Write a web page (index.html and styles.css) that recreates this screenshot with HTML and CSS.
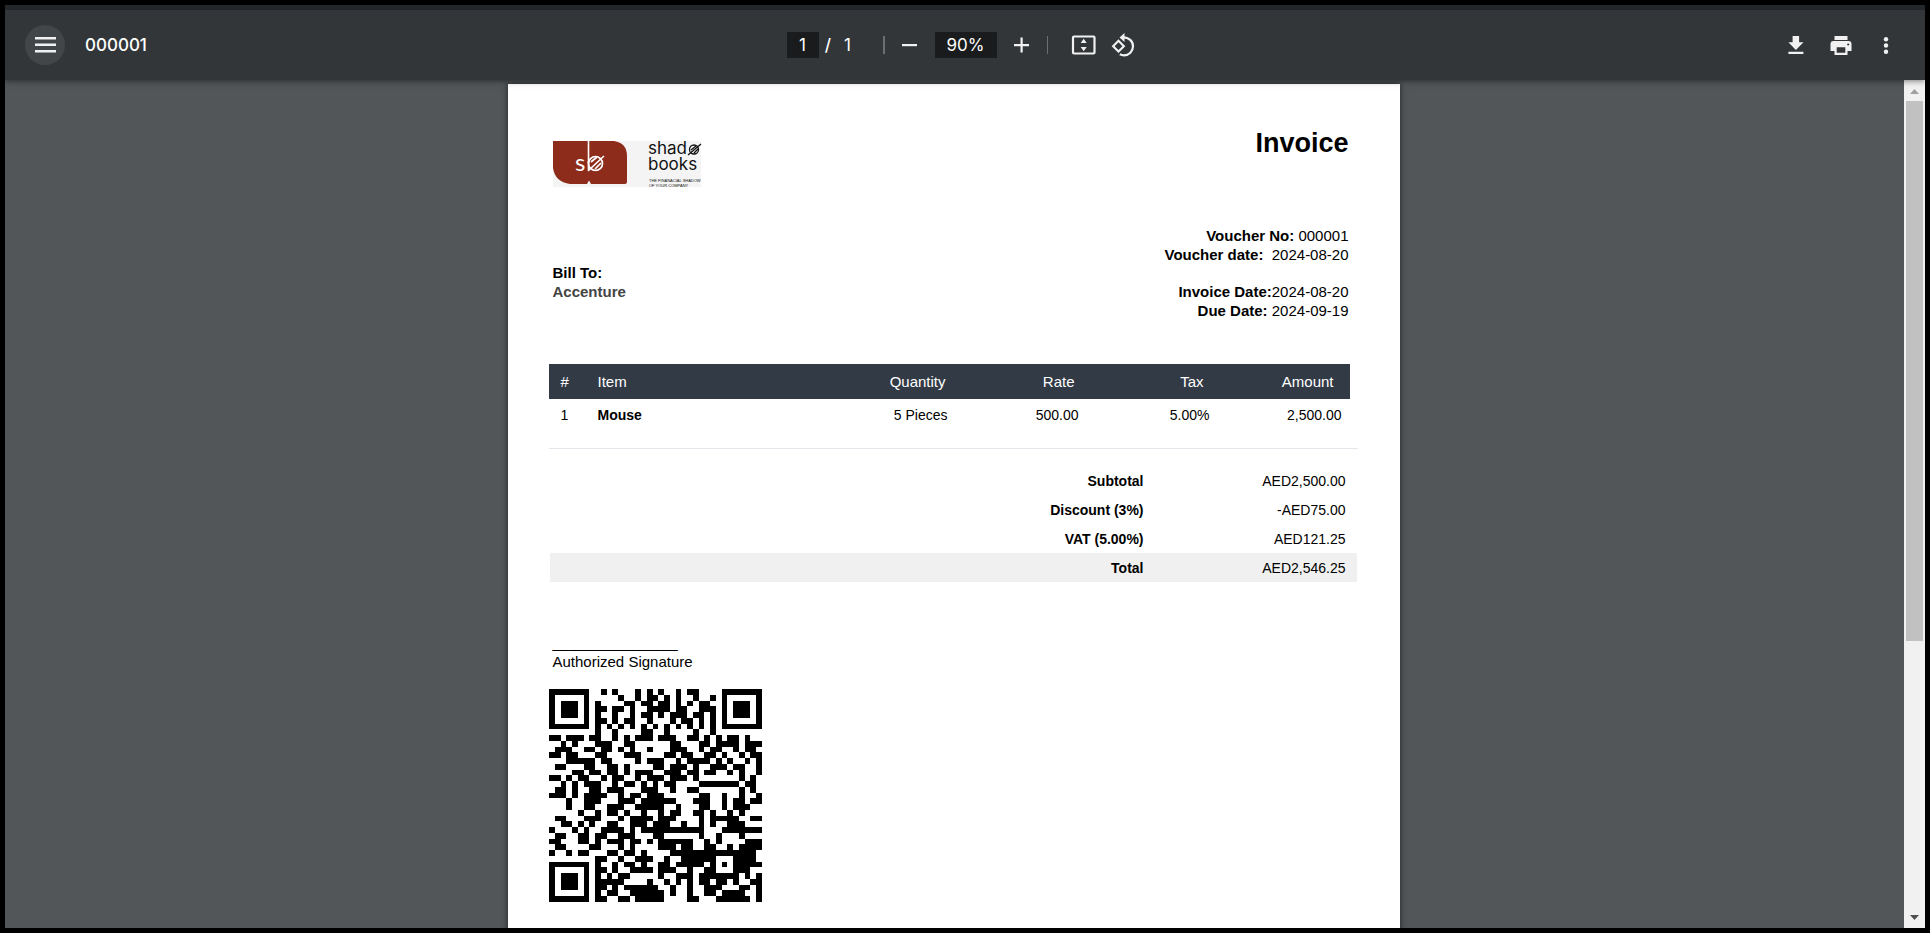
FILE: index.html
```html
<!DOCTYPE html>
<html lang="en">
<head>
<meta charset="utf-8">
<title>000001</title>
<link rel="stylesheet" href="styles.css">
</head>
<body>
<header class="toolbar">
  <div class="tool-left">
    <button class="menu-btn" aria-label="Menu"><svg width="22" height="16" viewBox="0 0 22 16"><path d="M1 0h21v2.400H1zM1 6.500h21v2.400H1zM1 13h21v2.400H1z" fill="currentColor"/></svg></button>
    <span class="doc-name">000001</span>
  </div>
  <div class="tool-center">
    <input class="page-input" type="text" value="1" aria-label="Page number">
    <span class="slash">/</span><span class="page-count">1</span>
    <span class="sep wide"></span>
    <button class="icon-btn" aria-label="Zoom out"><svg width="24" height="24" viewBox="0 0 24 24"><path d="M4 11h15v2.200H4z" fill="currentColor"/></svg></button>
    <input class="zoom-input" type="text" value="90%" aria-label="Zoom level">
    <button class="icon-btn" aria-label="Zoom in"><svg width="24" height="24" viewBox="0 0 24 24"><path d="M4 11h6.500V4.500h2.200V11H19v2.200h-6.300v6.300h-2.200v-6.300H4z" fill="currentColor"/></svg></button>
    <span class="sep"></span>
    <button class="icon-btn fit" aria-label="Fit to page"><svg width="28" height="28" viewBox="0 0 28 28"><rect x="3" y="5.500" width="21.500" height="17" rx="1" fill="none" stroke="currentColor" stroke-width="2.200"/><path d="M13.700 7.800l3 4.300h-6zM13.700 20.200l3-4.300h-6z" fill="currentColor"/></svg></button>
    <button class="icon-btn rotate" aria-label="Rotate"><svg width="28" height="28" viewBox="0 0 28 28"><path d="M9.500 9.800l5.400 5.400-5.400 5.400-5.400-5.400z" fill="none" stroke="currentColor" stroke-width="2.100"/><path d="M14 6.300c6 0 10 4 10 9s-4 9-9 9c-1.800 0-3-.4-4.200-1" fill="none" stroke="currentColor" stroke-width="2.200"/><path d="M15.500 2v9l-5-4.500z" fill="currentColor"/></svg></button>
  </div>
  <div class="tool-right">
    <button class="icon-btn" aria-label="Download"><svg width="24" height="24" viewBox="0 0 24 24"><path d="M8.600 3h6.500v6.200h4.400L11.900 17 4.400 9.200h4.200zM4.400 18.800h15V21h-15z" fill="currentColor"/></svg></button>
    <button class="icon-btn" aria-label="Print"><svg width="24" height="24" viewBox="0 0 24 24"><path d="M5.500 3h13v4h-13zM4.500 8h15a3 3 0 0 1 3 3v7h-4v4h-13v-4h-4v-7a3 3 0 0 1 3-3zM7.700 14.200v5.600h8.600v-5.600z" fill="currentColor" fill-rule="evenodd"/><circle cx="19.200" cy="11.500" r="1.100" fill="#323639"/></svg></button>
    <button class="icon-btn" aria-label="More actions"><svg width="24" height="24" viewBox="0 0 24 24" fill="currentColor"><circle cx="12" cy="6.200" r="2.200"/><circle cx="12" cy="12.500" r="2.200"/><circle cx="12" cy="18.800" r="2.200"/></svg></button>
  </div>
</header>
<main class="viewer">
  <div class="canvas">
    <article class="page">
      <div class="top">
        <svg class="logo" width="149" height="46" viewBox="0 0 149 46" role="img" aria-label="shado books">
          <rect width="148" height="46" fill="#f4f4f4"/>
          <path d="M0 0H61Q74 2 74 15V41Q74 43 72 43H38L36 39.500 34 43H17Q2 41 0 27Z" fill="#8e2c1b"/>
          <path d="M35.500 0v22" stroke="#fff" stroke-width="1.600"/>
          <text class="logo-mark" x="22" y="29.500">s</text>
          <g fill="none" stroke="#fff" stroke-width="1.700"><circle cx="42.500" cy="22.500" r="7"/><path d="M35.500 20v9M35 30L51 15M38 21l6-5M42 28l6-6"/></g>
          <text class="logo-word" x="95" y="13">shad</text>
          <g fill="none" stroke="#111" stroke-width="1.300"><circle cx="141" cy="8.500" r="4.500"/><path d="M135 14L148 3M138 9l5-4M141 12l4-4"/></g>
          <text class="logo-word" x="95" y="29">books</text>
          <text class="logo-tag" x="96" y="41">THE FINANACIAL SHADOW</text>
          <text class="logo-tag" x="96" y="46">OF YOUR COMPANY</text>
        </svg>
        <h1 class="title">Invoice</h1>
      </div>
      <div class="info">
        <div class="bill"><b>Bill To:</b><b class="client">Accenture</b></div>
        <div class="dates">
          <div><b>Voucher No:</b> 000001</div>
          <div><b>Voucher date:</b>&nbsp; 2024-08-20</div>
          <div class="second"><b>Invoice Date:</b>2024-08-20</div>
          <div><b>Due Date:</b> 2024-09-19</div>
        </div>
      </div>
      <table class="items">
        <colgroup><col class="c-num"><col class="c-item"><col class="c-qty"><col class="c-rate"><col class="c-tax"><col class="c-amt"></colgroup>
        <thead><tr><th>#</th><th>Item</th><th class="qty">Quantity</th><th class="rate">Rate</th><th class="tax">Tax</th><th class="amt">Amount</th></tr></thead>
        <tbody><tr><td>1</td><td><b>Mouse</b></td><td>5 Pieces</td><td>500.00</td><td>5.00%</td><td>2,500.00</td></tr></tbody>
      </table>
      <hr class="rule">
      <table class="totals">
        <tr><th>Subtotal</th><td>AED2,500.00</td></tr>
        <tr><th>Discount (3%)</th><td>-AED75.00</td></tr>
        <tr><th>VAT (5.00%)</th><td>AED121.25</td></tr>
        <tr class="grand"><th>Total</th><td>AED2,546.25</td></tr>
      </table>
      <div class="sign"><div>_______________</div><div>Authorized Signature</div></div>
      <svg class="qr" id="qr" viewBox="0 0 37 37" role="img" aria-label="QR code" shape-rendering="crispEdges"></svg>
    </article>
  </div>
  <div class="scrollbar">
    <svg width="21" height="21" viewBox="0 0 21 21"><path d="M6 14h9l-4.500-5z" fill="#a0a0a0"/></svg>
    <div class="track"><div class="thumb"></div></div>
    <svg width="21" height="21" viewBox="0 0 21 21"><path d="M6 8h9l-4.500 5z" fill="#505050"/></svg>
  </div>
</main>
<script src="qr.js"></script>
</body>
</html>
```
FILE: styles.css
```css
* { box-sizing: border-box; }
body {
  margin: 0;
  height: 100vh;
  border: 5px solid #000;
  display: flex;
  flex-direction: column;
  overflow: hidden;
  background: #525659;
  font-family: "Liberation Sans", Arial, sans-serif;
  font-size: 15px;
  color: #000;
}
button { border: 0; padding: 0; background: none; color: #f1f1f1; display: grid; place-items: center; }
.toolbar {
  display: grid;
  grid-template-columns: 1fr auto 1fr;
  align-items: center;
  flex: none;
  height: 75px;
  padding: 0 27px 0 20px;
  border-top: 5px solid #23272b;
  background: #323639;
  box-shadow: 0 1px 6px rgba(0, 0, 0, 0.5);
  position: relative;
  z-index: 1;
  color: #fff;
  font: 500 17px Inter, sans-serif;
}
.tool-left, .tool-center, .tool-right { display: flex; align-items: center; }
.tool-right { justify-content: flex-end; gap: 21px; }
.menu-btn { width: 40px; height: 40px; border-radius: 50%; background: #424649; }
.doc-name { margin-left: 20px; }
.icon-btn { width: 24px; height: 24px; }
.page-input, .zoom-input {
  height: 26px;
  border: 0;
  padding: 0;
  background: #191b1c;
  color: #fff;
  text-align: center;
  font: 400 17px Inter, sans-serif;
}
.page-input { width: 32px; }
.zoom-input { width: 62px; margin: 0 13px; }
.slash { width: 19px; text-align: center; }
.page-count { width: 20px; text-align: center; font-weight: 400; }
.sep { width: 1px; height: 18px; margin-left: 13px; background: #6c6f72; }
.sep.wide { width: 2px; margin: 0 13px 0 25px; }
.icon-btn.fit { width: 28px; height: 28px; margin-left: 22px; }
.icon-btn.rotate { width: 28px; height: 28px; margin-left: 11px; }

.viewer { flex: 1; min-height: 0; display: flex; }
.canvas { flex: 1; display: flex; justify-content: center; align-items: flex-start; padding: 4px 2px 0 0; overflow: hidden; }
.page {
  flex: none;
  width: 892px;
  min-height: 1262px;
  padding: 43px 41px;
  background: #fff;
  box-shadow: 0 0 6px rgba(0, 0, 0, 0.6);
}
.top { display: flex; justify-content: space-between; padding: 0 10px 0 4px; }
.logo { margin-top: 14px; overflow: visible; }
.logo-mark { font: 400 24px Lato, sans-serif; fill: #fff; }
.logo-word { font: 400 17px Inter, sans-serif; fill: #111; }
.logo-tag { font: 400 4px "Liberation Sans", sans-serif; fill: #111; }
.title { margin: 0; font-size: 27px; line-height: 32px; }
.info { display: flex; justify-content: space-between; margin-top: 39px; padding: 0 10px 0 4px; line-height: 19px; }
.bill { margin-top: 37px; display: flex; flex-direction: column; }
.client { color: #444; }
.dates { text-align: right; }
.second { margin-top: 18px; }

table { border-collapse: collapse; table-layout: fixed; }
th, td { padding: 0; }
.items { width: 801px; margin-top: 44px; text-align: right; }
.c-num { width: 49px; }
.c-item { width: 241px; }
.c-qty { width: 117px; }
.c-rate, .c-tax { width: 131px; }
.c-amt { width: 132px; }
.items thead { background: #323a46; color: #fff; }
.items th { height: 35px; font-weight: 400; text-align: right; }
.items td { height: 32px; padding-right: 8px; font-size: 14px; }
.items th:nth-child(1), .items td:nth-child(1) { padding-left: 12px; text-align: left; }
.items th:nth-child(2), .items td:nth-child(2) { text-align: left; }
.items .qty { padding-right: 10px; }
.items .rate { padding-right: 12px; }
.items .tax { padding-right: 14px; }
.items .amt { padding-right: 16px; }
.rule { width: 809px; height: 1px; margin: 17px 0; border: 0; background: #e3e7ec; }
.totals { width: 807px; margin-left: 1px; font-size: 14px; text-align: right; }
.totals th { width: 602px; height: 29px; padding-right: 8px; text-align: right; }
.totals td { padding-right: 11px; }
.grand { background: #f0f0f0; }
.sign { margin: 51px 0 18px 4px; line-height: 19px; }
.qr { display: block; width: 213px; height: 213px; }

.scrollbar { width: 21px; flex: none; display: flex; flex-direction: column; background: #f1f1f1; }
.track { flex: 1; padding: 0 2px; }
.thumb { height: 67%; background: #c1c1c1; }
```
FILE: qr.js
```js
const rows = [
  "1111111001010001010100101100001111111",
  "1000001000001001011010100100101000001",
  "1011101010000110110110101011001011101",
  "1011101011011010011110110011101011101",
  "1011101010010010110101110110101011101",
  "1000001011010110010001011010101000001",
  "1111111010101010101010101010101111111",
  "0000000010010000110010000100100000000",
  "1101110110010101110111001101010110100",
  "0010100011100110000001100011011110111",
  "0111001101101010010001110010110010110",
  "1101100011000111000011011001101001011",
  "0001111101100001011100101111010100101",
  "0110001100110100001101110100111011001",
  "0000110110110101110011101101100101001",
  "1101011001011001011101110100000001010",
  "0010101110010110101011000011111110110",
  "0110100110111000111001001100000001010",
  "1110101111001011011100000011001001001",
  "0001001110001110111111000111001011011",
  "0001001100111001111100100011001011100",
  "0000010010110100100101100110100101000",
  "0110001110001011110111000010111110011",
  "0011010100110011101110010010100111000",
  "1000101001111010111111111110001111111",
  "0110011011001110001100000010010001000",
  "1100011010111011010111111001010000111",
  "0110000110001010000111011001100101111",
  "1001011000110110100001111111111111110",
  "0000000011001001110010011111100011110",
  "1111111010010110100110111110101011111",
  "1000001011010011110111001001100011100",
  "1011101010101100000100111011111110101",
  "1011101011111000010010101011011010011",
  "1011101011010111111001001001110001101",
  "1000001010110011111101001001101111001",
  "1111111011001101111100001100011111101"
];
const d = rows.map((row, y) =>
  [...row].map((v, x) => (v === "1" ? `M${x} ${y}h1v1h-1z` : "")).join("")
).join("");
const path = document.createElementNS("http://www.w3.org/2000/svg", "path");
path.setAttribute("d", d);
document.getElementById("qr").append(path);
```
